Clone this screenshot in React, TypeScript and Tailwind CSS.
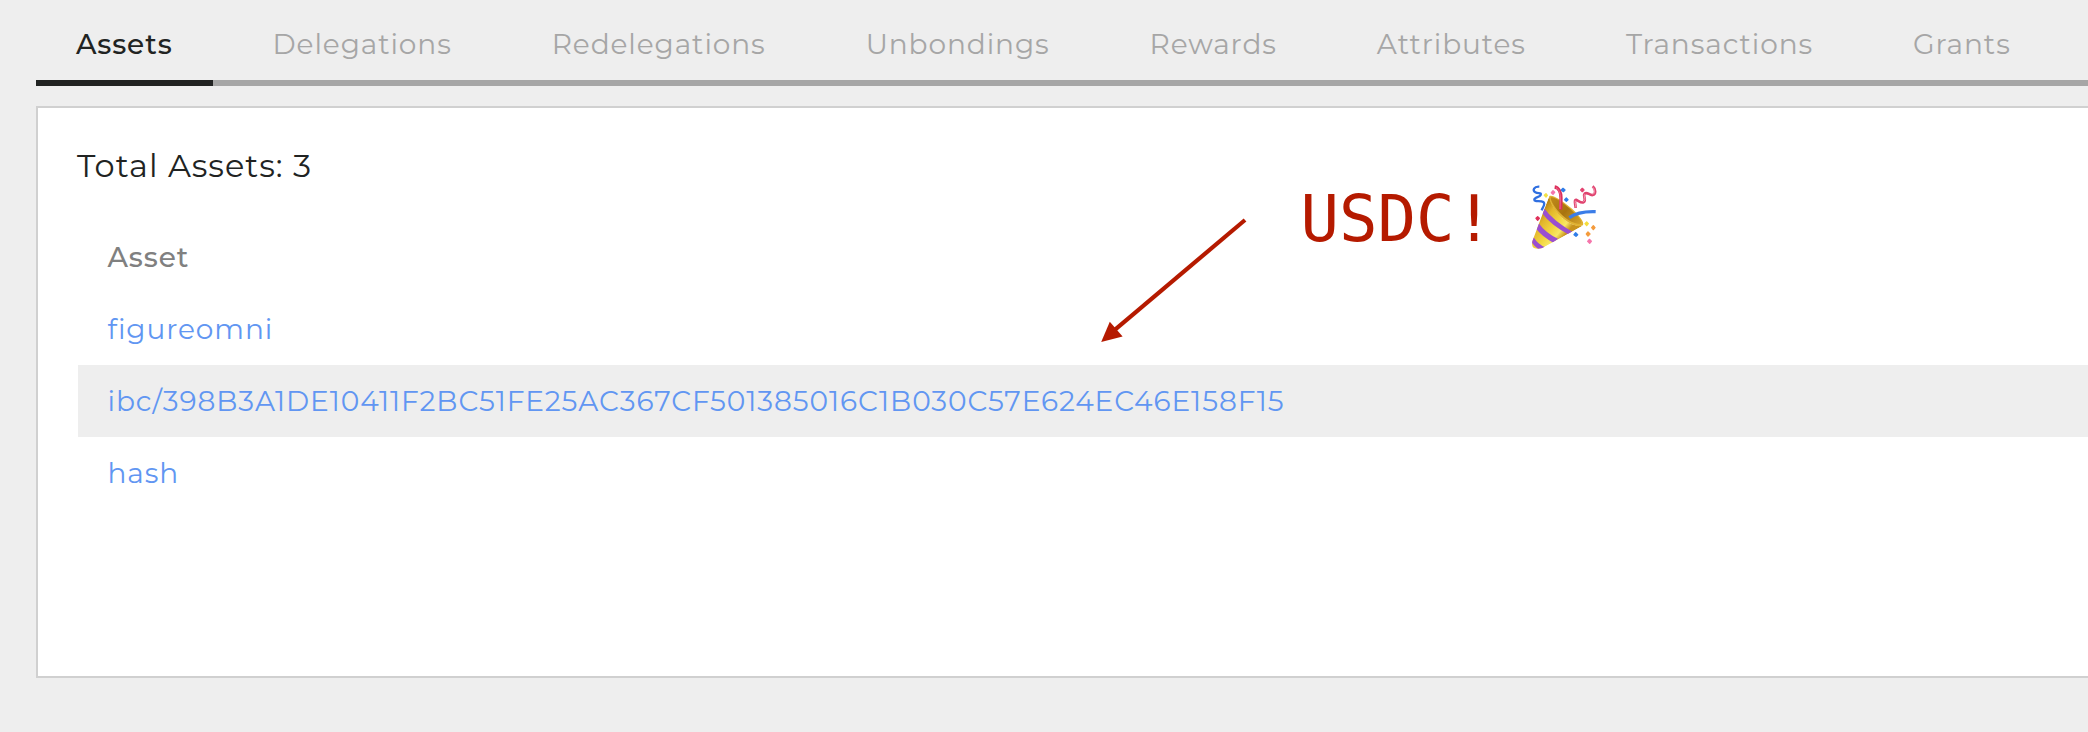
const tabs = [
  "Assets",
  "Delegations",
  "Redelegations",
  "Unbondings",
  "Rewards",
  "Attributes",
  "Transactions",
  "Grants",
];

const assets = [
  "figureomni",
  "ibc/398B3A1DE10411F2BC51FE25AC367CF501385016C1B030C57E624EC46E158F15",
  "hash",
];

function Arrow() {
  return (
    <svg className="mt-[30px] h-[160px] w-[190px] shrink-0" viewBox="0 0 190 160">
      <path d="M165 20L33 131.3" stroke="#b51a00" strokeWidth="4.2" fill="none" />
      <path d="M21.2 141.9L29.8 121.8L42.6 136.6Z" fill="#b51a00" />
    </svg>
  );
}

function PartyPopper() {
  return (
    <svg className="h-[90px] w-[110px] shrink-0" viewBox="0 0 330 270" fill="none">
      <defs>
        <linearGradient id="cone" x1="85" y1="130" x2="165" y2="195" gradientUnits="userSpaceOnUse">
          <stop offset="0" stopColor="#b98212" />
          <stop offset="0.25" stopColor="#e2b52b" />
          <stop offset="0.6" stopColor="#f3d640" />
          <stop offset="0.82" stopColor="#f8e765" />
          <stop offset="1" stopColor="#c8921c" />
        </linearGradient>
        <linearGradient id="mouth" x1="120" y1="80" x2="215" y2="165" gradientUnits="userSpaceOnUse">
          <stop offset="0" stopColor="#c18b1b" />
          <stop offset="0.5" stopColor="#a8740f" />
          <stop offset="1" stopColor="#d8a62c" />
        </linearGradient>
        <clipPath id="coneShape">
          <path d="M118 78L67 214Q64 230 72 234Q82 239 97 234L218 167Q190 172 158 145Q124 113 118 78Z" />
        </clipPath>
      </defs>
      <path d="M88 50C72 49 66 61 76 67C84 72 96 66 92 75C89 82 73 81 73 89C73 97 91 90 100 96C108 102 98 111 95 121" stroke="#2f6fe0" strokeWidth="7" />
      <g clipPath="url(#coneShape)">
        <path d="M118 78L60 222L80 245L218 167L158 145Z" fill="url(#cone)" />
        <path d="M100 112Q130 154 192 188L180 196Q122 166 94 127Z" fill="#9a4fd0" />
        <path d="M85 158Q107 189 144 206L130 218Q97 201 77 175Z" fill="#9a4fd0" />
        <path d="M71 202Q84 224 106 232L92 242Q75 232 64 215Z" fill="#9a4fd0" />
      </g>
      <path d="M118 78C126 72 157 91 186 116C208 136 224 157 219 165C209 174 180 165 153 140C130 119 115 88 118 78Z" fill="#e0b232" />
      <path d="M122 82C132 79 157 96 181 117C203 137 217 153 214 160C206 166 180 157 157 136C134 115 121 92 122 82Z" fill="url(#mouth)" />
      <path d="M134 51C147 53 153 69 153 84L152 119" stroke="#dc2f5b" strokeWidth="10" />
      <path d="M138 53C147 57 151 70 151 84L150 117" stroke="#f07a9b" strokeWidth="2.5" />
      <path d="M178 143C200 127 227 124 257 125" stroke="#3b7de8" strokeWidth="10" />
      <path d="M248 49C258 58 258 73 248 75C239 77 231 64 224 71C217 79 232 90 220 97C211 102 197 82 195 93C194 99 197 107 197 114" stroke="#e0436f" strokeWidth="8" />
      <path d="M249 52C255 60 255 71 248 73M224 73C219 80 231 88 220 95M196 92C194 99 198 107 198 113" stroke="#f7a0b8" strokeWidth="3" />
      <g strokeLinejoin="round" strokeWidth="4">
        <path d="M108 71L112 76L108 81L103 76Z" fill="#f3e245" stroke="#f3e245" />
        <path d="M129 62L134 67L129 73L124 68Z" fill="#f576ac" stroke="#f576ac" />
        <path d="M159 55L165 60L160 65L154 60Z" fill="#2f7de8" stroke="#2f7de8" />
        <path d="M169 84L174 89L169 94L164 89Z" fill="#2f7de8" stroke="#2f7de8" />
        <path d="M217 55L222 60L217 65L212 60Z" fill="#e34270" stroke="#e34270" />
        <path d="M83 140L88 145L83 151L78 145Z" fill="#df2f59" stroke="#df2f59" />
        <path d="M230 156L235 161L230 167L225 161Z" fill="#f5dd3d" stroke="#f5dd3d" />
        <path d="M250 167L255 173L250 179L245 173Z" fill="#f49b3c" stroke="#f49b3c" />
        <path d="M234 186L240 192L234 198L229 192Z" fill="#f49b3c" stroke="#f49b3c" />
        <path d="M197 188L203 194L198 199L192 194Z" fill="#2f7de8" stroke="#2f7de8" />
        <path d="M238 208L244 214L239 220L233 214Z" fill="#f576ac" stroke="#f576ac" />
      </g>
    </svg>
  );
}

export default function App() {
  return (
    <div className="relative flex h-[732px] flex-col gap-5 overflow-hidden bg-[#eeeeee] pt-2 pl-9 font-[Montserrat,Inter,sans-serif] text-[28px] tracking-[0.9px] text-[#212322]">
      <nav className="flex h-[78px] shrink-0 gap-5 border-b-[6px] border-[#a6a6a6]">
        {tabs.map((tab, i) => (
          <button
            key={tab}
            className={`h-[78px] shrink-0 border-b-[6px] px-10 leading-[72px] ${
              i === 0 ? "border-[#212322] font-medium" : "border-transparent text-[#a6a6a6]"
            }`}
          >
            {tab}
          </button>
        ))}
      </nav>

      <main className="flex h-[572px] shrink-0 flex-col gap-[38px] border-2 border-r-0 border-[#d0d0d0] bg-white py-10 pl-10">
        <h2 className="-ml-px text-[32px] leading-[35px] tracking-[1px]">Total Assets: 3</h2>
        <table className="w-full border-collapse text-left tracking-[0.92px]">
          <thead>
            <tr className="h-[72px] leading-[72px] text-[#808080]">
              <th className="p-0 pl-[29.5px] font-medium">Asset</th>
            </tr>
          </thead>
          <tbody>
            {assets.map((asset) => (
              <tr key={asset} className="h-[72px] leading-[72px] even:bg-[#eeeeee]">
                <td className="p-0 pl-[29.5px]">
                  <a href="#" className="text-[#6196f2]">{asset}</a>
                </td>
              </tr>
            ))}
          </tbody>
        </table>
      </main>

      <div className="absolute top-[170px] left-[1080px] flex items-start">
        <Arrow />
        <p className="mt-3 mr-[17px] ml-[30.5px] font-['DejaVu_Sans_Mono',monospace] text-[64px] leading-[74px] tracking-normal text-[#b51a00]">
          USDC!
        </p>
        <PartyPopper />
      </div>
    </div>
  );
}
